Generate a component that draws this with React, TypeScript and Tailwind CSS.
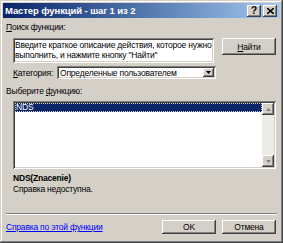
import React from "react";

const raised =
  "bg-[#d4d0c8] shadow-[inset_-1px_-1px_#404040,inset_1px_1px_#ffffff,inset_-2px_-2px_#808080,inset_2px_2px_#d4d0c8]";
const sunken =
  "bg-white shadow-[inset_1px_1px_#808080,inset_-1px_-1px_#ffffff,inset_2px_2px_#404040,inset_-2px_-2px_#d4d0c8]";

const TitleButton = ({ children }: { children: React.ReactNode }) => (
  <div
    className={`${raised} w-[14px] h-[12px] flex items-center justify-center text-[10px] font-bold leading-none text-black`}
  >
    {children}
  </div>
);

const Button = ({
  label,
  className,
}: {
  label: React.ReactNode;
  className?: string;
}) => (
  <div
    className={`${raised} w-[54px] flex items-center justify-center text-black ${className}`}
  >
    {label}
  </div>
);

const Arrow = ({ up }: { up?: boolean }) => (
  <div className={`${raised} w-[12px] h-[12px] flex items-center justify-center`}>
    <svg width="5" height="3" viewBox="0 0 5 3">
      <path d={up ? "M2.5 0L5 3H0z" : "M0 0h5L2.5 3z"} fill="#808080" />
    </svg>
  </div>
);

export default function App() {
  return (
    <div
      className="w-[283px] h-[243px] bg-[#d4d0c8] p-[3px] shadow-[inset_-1px_-1px_#404040,inset_1px_1px_#d4d0c8,inset_-2px_-2px_#808080,inset_2px_2px_#ffffff] flex flex-col text-black"
      style={{ fontFamily: '"Liberation Sans", Arial, sans-serif' }}
    >
      {/* title bar */}
      <div className="h-[15px] flex items-center pl-[2px] pr-[3px] bg-gradient-to-r from-[#0a246a] to-[#a6caf0]">
        <div className="text-white font-bold text-[9.5px] tracking-[-0.1px] leading-none">
          Мастер функций - шаг 1 из 2
        </div>
        <div className="ml-auto flex gap-[2px]">
          <TitleButton>?</TitleButton>
          <TitleButton>
            <svg width="7" height="6" viewBox="0 0 7 6">
              <path d="M0 0L7 6M7 0L0 6" stroke="black" strokeWidth="1.6" />
            </svg>
          </TitleButton>
        </div>
      </div>

      <div className="flex-1 flex flex-col px-[3px] text-[8.5px] tracking-[-0.2px] leading-[10px]">
        <div className="mt-[4px]">
          <span className="underline">П</span>оиск функции:
        </div>
        <div className="flex mt-[6px]">
          <div className={`${sunken} ml-[7px] w-[201px] h-[25px] px-[2px] pt-[2px] whitespace-nowrap`}>
            <div>Введите краткое описание действия, которое нужно</div>
            <div>выполнить, и нажмите кнопку "Найти"</div>
          </div>
          <Button
            className="ml-auto h-[17px] mr-[1px]"
            label={
              <>
                <span className="underline">Н</span>айти
              </>
            }
          />
        </div>

        <div className="flex items-center mt-[3px] ml-[7px]">
          <div className="w-[44px]">
            <span className="underline">К</span>атегория:
          </div>
          <div className={`${sunken} w-[159px] h-[13px] flex items-center pl-[3px] pr-[2px]`}>
            Определенные пользователем
            <div className={`${raised} ml-auto w-[11px] h-[9px] flex items-center justify-center`}>
              <svg width="5" height="3" viewBox="0 0 5 3">
                <path d="M0 0h5L2.5 3z" fill="black" />
              </svg>
            </div>
          </div>
        </div>

        <div className="mt-[7px]">
          Выберите <span className="underline">ф</span>ункцию:
        </div>

        <div className={`${sunken} ml-[7px] mt-[5px] w-[263px] h-[68px] p-[2px] flex`}>
          <div className="flex-1">
            <div className="h-[9px] bg-[#0a246a] text-white outline outline-1 outline-dotted outline-[#d4d0c8] -outline-offset-1 pl-[1px] leading-[9px]">
              NDS
            </div>
          </div>
          <div className="w-[12px] flex flex-col justify-between bg-[#ecebe7]">
            <Arrow up />
            <Arrow />
          </div>
        </div>

        <div className="ml-[7px] mt-[4px] font-bold">NDS(Znacenie)</div>
        <div className="ml-[7px] mt-[1px]">Справка недоступна.</div>

        <div className="mt-auto border-t border-t-[#808080] border-b border-b-white" />

        <div className="flex items-center mt-[5px] mb-[6px]">
          <div className="text-[#0000ff] underline">Справка по этой функции</div>
          <Button className="ml-auto h-[14px]" label="OK" />
          <Button className="ml-[6px] h-[14px] mr-[1px]" label="Отмена" />
        </div>
      </div>
    </div>
  );
}
